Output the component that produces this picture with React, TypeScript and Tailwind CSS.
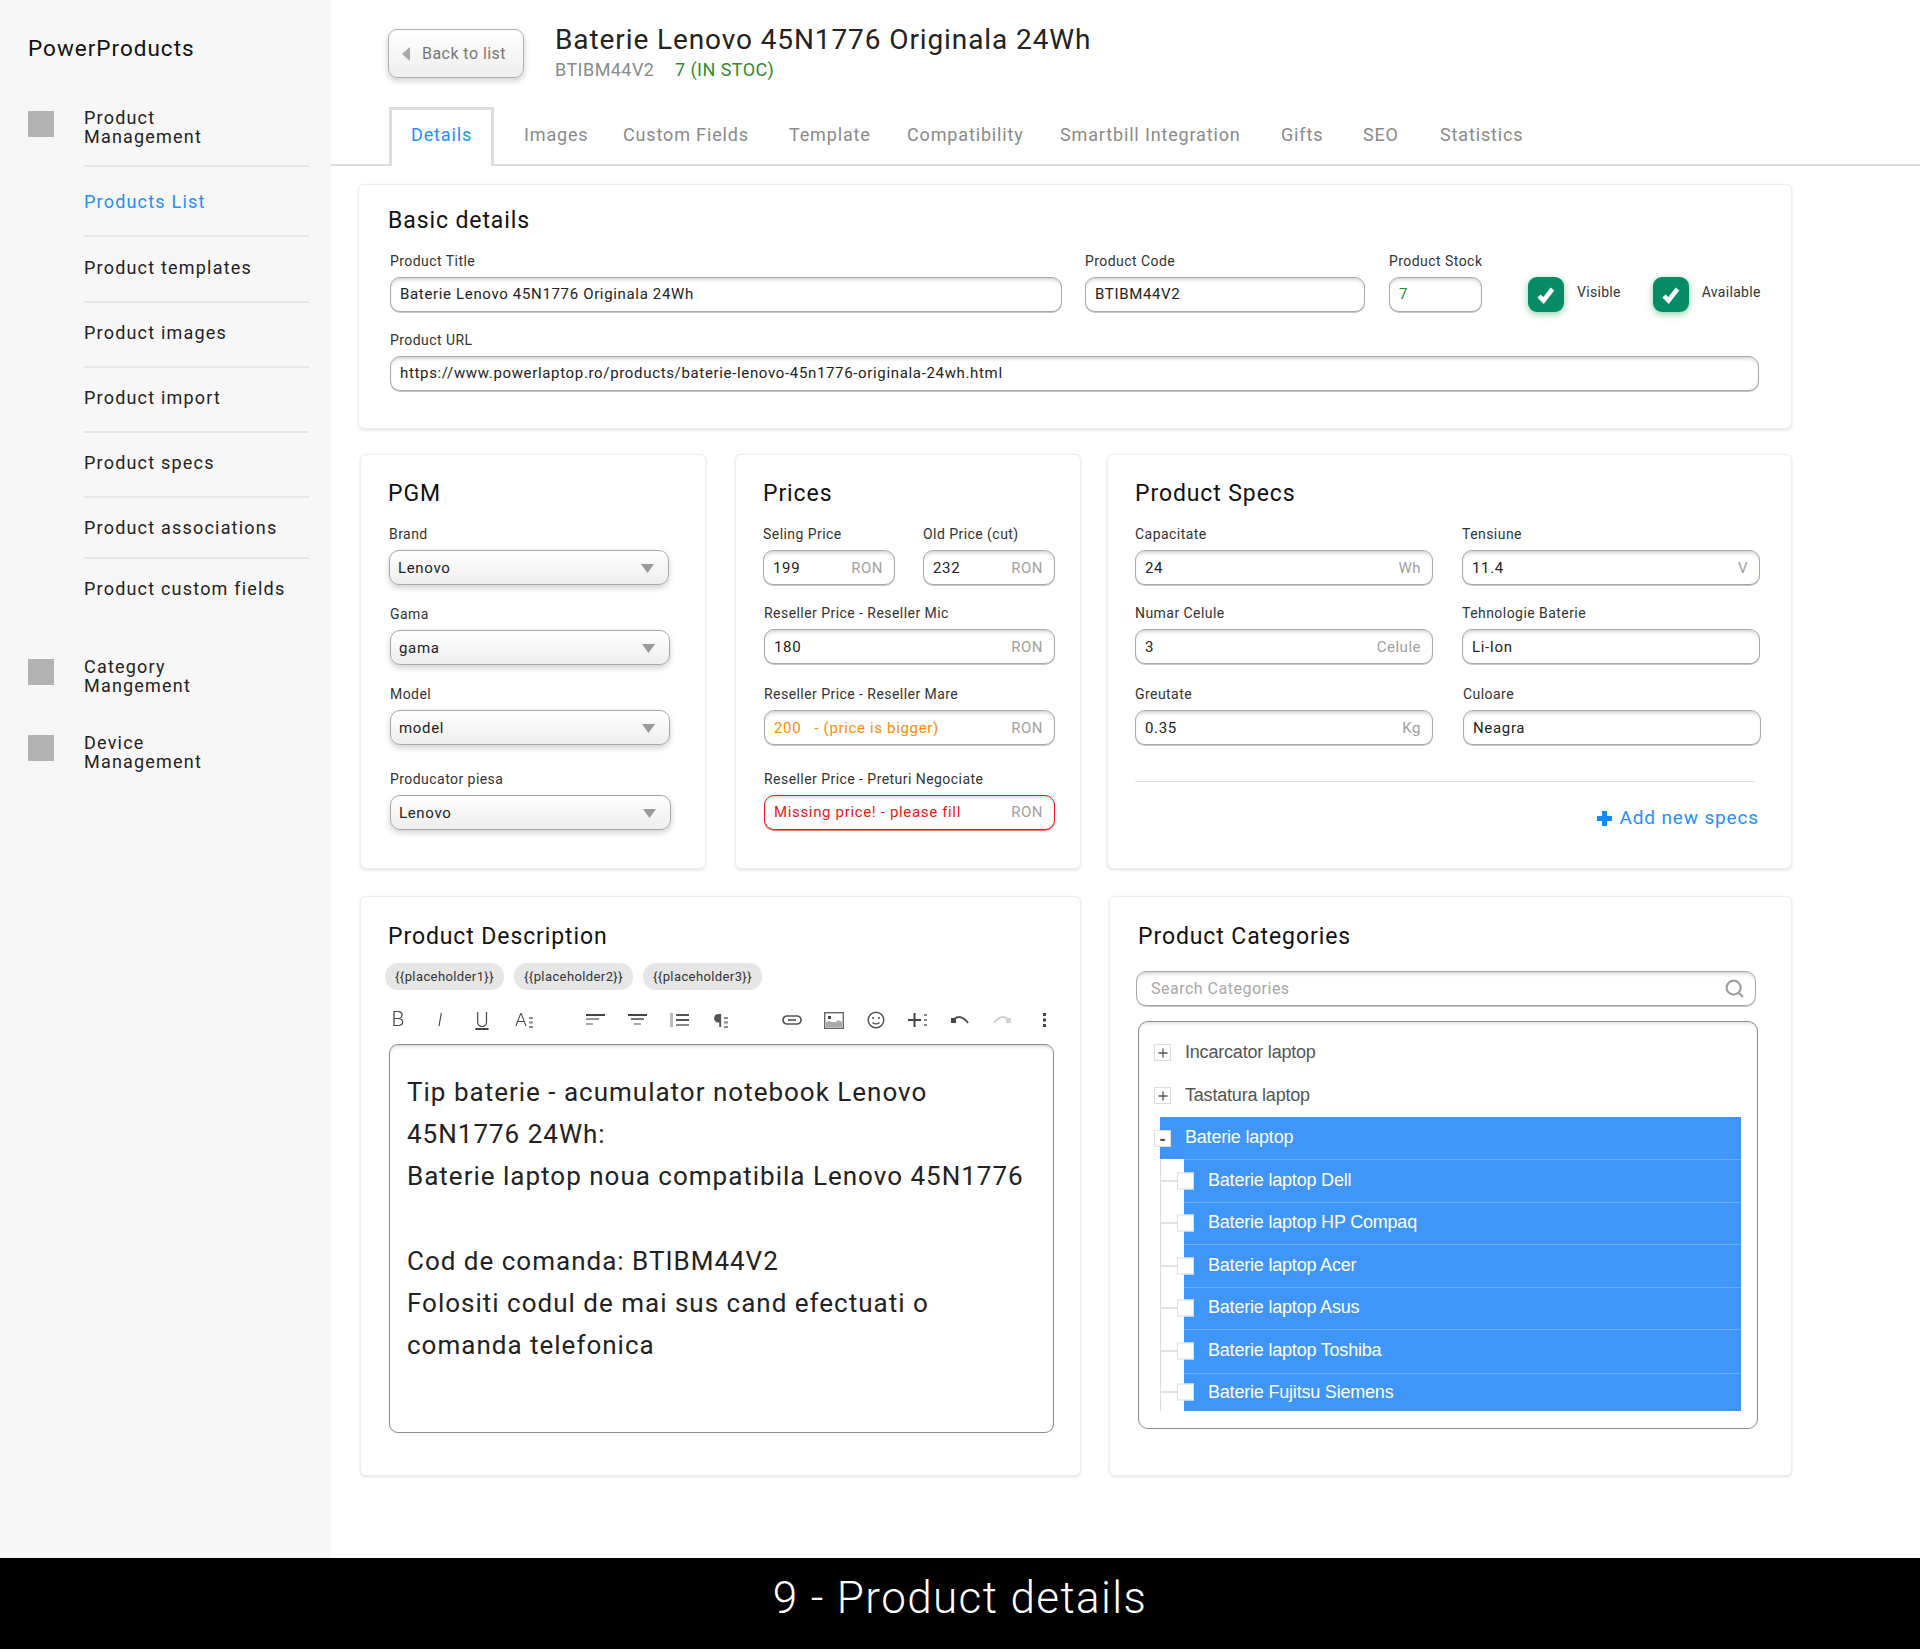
import React from "react";
import { Plus, Search } from "lucide-react";

const label = "block h-[16px] mb-[8px] text-[14px] leading-[16px] tracking-[0.45px] text-[#333] whitespace-nowrap";
const inputBox = "h-[35px] flex items-center justify-between pl-[9px] pr-[11px] rounded-[10px] border border-[#a8a8a8] bg-white text-[15px] tracking-[0.66px] text-[#222] shadow-[inset_0_4px_4px_-3px_rgba(0,0,0,0.25),0_1px_0_#c4c4c4] whitespace-nowrap";
const rowBox = inputBox + " pt-[1px]";
const selectBox = "h-[35px] flex items-center justify-between pt-[1px] pl-[8px] pr-[14px] rounded-[10px] border border-[#a8a8a8] bg-gradient-to-b from-white to-[#eeeeee] text-[15px] tracking-[0.66px] text-[#222] shadow-[0_3px_6px_rgba(0,0,0,0.18)] whitespace-nowrap";
const card = "bg-white rounded-[6px] border border-[#eeeeee] shadow-[0_1px_3px_rgba(0,0,0,0.12)]";
const h2 = "h-[28px] text-[23px] leading-[28px] tracking-[0.9px] text-[#111] whitespace-nowrap";
const unit = "text-[#a0a0a0] tracking-[0.5px]";
const navText = "ml-[30px] text-[18px] leading-[19px] tracking-[1.2px] text-[#222]";
const navIcon = "block w-[26px] h-[26px] bg-[#b3b3b3] shrink-0";
const sub = "flex items-center ml-[84px] w-[225px] border-b-2 border-[#e6e6e6] text-[18px] tracking-[1.2px] text-[#222]";

function Sidebar() {
  return (
    <aside className="w-[331px] shrink-0 bg-[#f7f7f7]">
      <div className="h-[108px] pl-[28px] pt-[34px] text-[22.5px] leading-[28px] tracking-[1px] text-[#111]">PowerProducts</div>
      <div className="flex pl-[28px] h-[57px] items-start">
        <span className={navIcon + " mt-[3px]"} />
        <div className={navText}>Product<br />Management</div>
      </div>
      <div className="h-[2px] ml-[84px] w-[225px] bg-[#e6e6e6]" />
      <div className={sub + " h-[70px]"}><span className="text-[#1e90ff]">Products List</span></div>
      <div className={sub + " h-[66px] pb-[3px]"}>Product templates</div>
      <div className={sub + " h-[65px] pb-[4px]"}>Product images</div>
      <div className={sub + " h-[65px] pb-[4px]"}>Product import</div>
      <div className={sub + " h-[65px] pb-[4px]"}>Product specs</div>
      <div className={sub + " h-[61px]"}>Product associations</div>
      <div className="flex items-center ml-[84px] w-[225px] h-[58px] text-[18px] tracking-[1.2px] text-[#222]">Product custom fields</div>
      <div className="flex pl-[28px] mt-[40px] h-[76px] items-start">
        <span className={navIcon + " mt-[2px]"} />
        <div className={navText}>Category<br />Mangement</div>
      </div>
      <div className="flex pl-[28px] items-start">
        <span className={navIcon + " mt-[2px]"} />
        <div className={navText}>Device<br />Management</div>
      </div>
    </aside>
  );
}

function Header() {
  return (
    <div className="h-[107px] flex items-start pl-[57px] pt-[29px]">
      <div className="w-[136px] h-[49px] shrink-0 flex items-center pl-[13px] rounded-[9px] border border-[#b0b0b0] bg-gradient-to-b from-white to-[#eeeeee] shadow-[0_3px_6px_rgba(0,0,0,0.18)]">
        <svg width="8" height="14" viewBox="0 0 8 14" className="mr-[12px]"><path d="M8 0v14L0 7z" fill="#a8a8a8" /></svg>
        <span className="text-[16px] tracking-[0.45px] text-[#777]">Back to list</span>
      </div>
      <div className="ml-[31px] -mt-[6px]">
        <div className="text-[28px] leading-[34px] tracking-[0.9px] text-[#222] whitespace-nowrap">Baterie Lenovo 45N1776 Originala 24Wh</div>
        <div className="flex mt-[2px] text-[18px] leading-[22px] tracking-[0.45px]">
          <span className="w-[120px] text-[#8a8a8a]">BTIBM44V2</span>
          <span className="text-[#2e8b2e]">7 (IN STOC)</span>
        </div>
      </div>
    </div>
  );
}

function Tabs() {
  const cls = "flex items-center h-[54px] text-[18px] tracking-[0.85px] text-[#8a8a8a] whitespace-nowrap";
  return (
    <div className="h-[59px] flex border-b-2 border-[#dddddd] pl-[58px]">
      <div className="w-[105px] h-[59px] mr-[30px] flex items-center justify-center pb-[7px] border-[3px] border-b-0 border-[#dddddd] bg-white text-[18px] tracking-[0.85px] text-[#1e90ff]">Details</div>
      <div className={cls + " w-[99px]"}>Images</div>
      <div className={cls + " w-[166px]"}>Custom Fields</div>
      <div className={cls + " w-[118px]"}>Template</div>
      <div className={cls + " w-[153px]"}>Compatibility</div>
      <div className={cls + " w-[221px]"}>Smartbill Integration</div>
      <div className={cls + " w-[82px]"}>Gifts</div>
      <div className={cls + " w-[77px]"}>SEO</div>
      <div className={cls}>Statistics</div>
    </div>
  );
}

function Field({ name, cls, children, box }: { name: string; cls?: string; children: React.ReactNode; box?: string }) {
  return (
    <div className={cls}>
      <span className={label}>{name}</span>
      <div className={box ?? rowBox}>{children}</div>
    </div>
  );
}

function CheckTick({ name, cls }: { name: string; cls: string }) {
  return (
    <div className={"flex items-start shrink-0 mt-[24px] " + cls}>
      <div className="w-[36px] h-[35px] shrink-0 rounded-[9px] bg-[#078a66] flex items-center justify-center shadow-[0_2px_7px_rgba(40,170,80,0.55)]">
        <svg width="20" height="18" viewBox="0 0 20 18"><path d="M3 10l4.500 4.500L16.500 3" fill="none" stroke="#fff" strokeWidth="4.500" /></svg>
      </div>
      <span className="ml-[13px] mt-[7px] text-[14px] leading-[16px] tracking-[0.3px] text-[#333]">{name}</span>
    </div>
  );
}

function BasicDetails() {
  return (
    <section className={card + " ml-[27px] w-[1434px] h-[245px] pt-[22px] pl-[31px]"}>
      <h2 className={h2 + " -ml-[2px]"}>Basic details</h2>
      <div className="flex mt-[18px]">
        <Field name="Product Title" box={inputBox} cls="w-[672px]">Baterie Lenovo 45N1776 Originala 24Wh</Field>
        <Field name="Product Code" box={inputBox} cls="w-[280px] ml-[23px]">BTIBM44V2</Field>
        <Field name="Product Stock" box={inputBox} cls="w-[93px] ml-[24px]"><span className="text-[#2e8b2e]">7</span></Field>
        <CheckTick name="Visible" cls="ml-[46px]" />
        <CheckTick name="Available" cls="ml-[32px]" />
      </div>
      <Field name="Product URL" box={inputBox} cls="w-[1369px] mt-[20px]">https://www.powerlaptop.ro/products/baterie-lenovo-45n1776-originala-24wh.html</Field>
    </section>
  );
}

function Arrow() {
  return <svg width="13" height="9" viewBox="0 0 13 9"><path d="M0 0h13L6.500 9z" fill="#9a9a9a" /></svg>;
}

function Pgm() {
  const items: [string, string, string][] = [
    ["Brand", "Lenovo", "mt-[18px] ml-[28px] w-[280px]"],
    ["Gama", "gama", "mt-[21px] ml-[29px] w-[280px]"],
    ["Model", "model", "mt-[21px] ml-[29px] w-[280px]"],
    ["Producator piesa", "Lenovo", "mt-[26px] ml-[29px] w-[281px]"],
  ];
  return (
    <section className={card + " w-[346px] h-[415px] pt-[25px]"}>
      <h2 className={h2 + " ml-[27px]"}>PGM</h2>
      {items.map(([n, v, c]) => (
        <Field key={n} name={n} cls={c} box={selectBox}>
          {v}
          <Arrow />
        </Field>
      ))}
    </section>
  );
}

function Prices() {
  return (
    <section className={card + " w-[346px] h-[415px] ml-[29px] pt-[25px] pl-[27px]"}>
      <h2 className={h2}>Prices</h2>
      <div className="flex mt-[18px]">
        <Field name="Seling Price" cls="w-[132px]">199<span className={unit}>RON</span></Field>
        <Field name="Old Price (cut)" cls="w-[132px] ml-[28px]">232<span className={unit}>RON</span></Field>
      </div>
      <Field name="Reseller Price - Reseller Mic" cls="w-[291px] ml-[1px] mt-[20px]">180<span className={unit}>RON</span></Field>
      <Field name="Reseller Price - Reseller Mare" cls="w-[291px] ml-[1px] mt-[22px]">
        <span className="text-[#ff8c00]">200 &nbsp; - (price is bigger)</span><span className={unit}>RON</span>
      </Field>
      <Field
        name="Reseller Price - Preturi Negociate"
        cls="w-[291px] ml-[1px] mt-[26px]"
        box="h-[35px] flex items-center justify-between pl-[9px] pr-[11px] rounded-[10px] border border-[#f01515] bg-white text-[15px] tracking-[0.66px] shadow-[inset_0_4px_4px_-3px_rgba(0,0,0,0.2),0_1px_0_#f77] whitespace-nowrap"
      >
        <span className="text-[#f01515]">Missing price! - please fill</span><span className={unit}>RON</span>
      </Field>
    </section>
  );
}

function Specs() {
  return (
    <section className={card + " w-[685px] h-[415px] ml-[26px] pt-[25px] pl-[27px]"}>
      <h2 className={h2}>Product Specs</h2>
      <div className="flex mt-[18px]">
        <Field name="Capacitate" cls="w-[298px]">24<span className={unit}>Wh</span></Field>
        <Field name="Tensiune" cls="w-[298px] ml-[29px]">11.4<span className={unit}>V</span></Field>
      </div>
      <div className="flex mt-[20px]">
        <Field name="Numar Celule" cls="w-[298px]">3<span className={unit}>Celule</span></Field>
        <Field name="Tehnologie Baterie" cls="w-[298px] ml-[29px]">Li-Ion</Field>
      </div>
      <div className="flex mt-[22px]">
        <Field name="Greutate" cls="w-[298px]">0.35<span className={unit}>Kg</span></Field>
        <Field name="Culoare" cls="w-[298px] ml-[30px]">Neagra</Field>
      </div>
      <div className="w-[620px] h-[1px] mt-[36px] bg-[#e0e0e0]" />
      <div className="w-[624px] flex justify-end items-center mt-[23px] text-[19px] leading-[26px] tracking-[0.85px] text-[#1e90ff]">
        <svg width="15" height="15" viewBox="0 0 15 15" className="mr-[8px]"><path d="M5 0h5v5h5v5h-5v5H5v-5H0V5h5z" fill="#0f8bff" /></svg>
        Add new specs
      </div>
    </section>
  );
}

const cell = "w-[42px] h-[24px] shrink-0 flex items-center justify-center text-[#444]";

function Tool() {
  return (
    <div className="h-[24px] mt-[18px] ml-[16px] flex items-center blur-[0.4px]">
      <span className={cell + " text-[21px] font-light"}>B</span>
      <span className={cell + " text-[19px] font-light italic"}>I</span>
      <span className={cell + " text-[20px] font-light underline"}>U</span>
      <span className={cell}>
        <span className="text-[19px] font-light">A</span>
        <svg width="4" height="11" viewBox="0 0 4 11" className="ml-[2px] mt-[4px]" fill="#888"><path d="M0 0h4v2H0zM0 4.500h4v2H0zM0 9h4v2H0z" /></svg>
      </span>
      <span className="w-[29px] shrink-0" />
      <span className={cell}>
        <svg width="19" height="14" viewBox="0 0 19 14"><path d="M0 1h19v2H0z" fill="#444" /><path d="M0 5h13v2H0z" fill="#999" /><path d="M0 10h7v2H0z" fill="#aaa" /></svg>
      </span>
      <span className={cell}>
        <svg width="19" height="14" viewBox="0 0 19 14"><path d="M0 1h19v2H0z" fill="#444" /><path d="M3 5h13v2H3z" fill="#777" /><path d="M6 10h7v2H6z" fill="#aaa" /></svg>
      </span>
      <span className={cell}>
        <svg width="19" height="16" viewBox="0 0 19 16"><path d="M0 1h3v14H0z" fill="#bbb" /><path d="M6 2h13v2H6zM6 7h13v2H6z" fill="#555" /><path d="M6 12h13v2H6z" fill="#888" /></svg>
      </span>
      <span className={cell}>
        <span className="text-[18px] font-bold text-[#555]">¶</span>
        <svg width="4" height="11" viewBox="0 0 4 11" className="ml-[2px] mt-[4px]" fill="#888"><path d="M0 0h4v2H0zM0 4.500h4v2H0zM0 9h4v2H0z" /></svg>
      </span>
      <span className="w-[29px] shrink-0" />
      <span className={cell}>
        <svg width="20" height="10" viewBox="0 0 20 10" fill="none" stroke="#555" strokeWidth="1.700"><rect x="1" y="1" width="18" height="8" rx="4" /><path d="M6 5h8" /></svg>
      </span>
      <span className={cell}>
        <svg width="20" height="17" viewBox="0 0 20 17"><rect x="0.700" y="0.700" width="18.600" height="15.600" fill="#fff" stroke="#666" strokeWidth="1.400" /><path d="M2 10l3-1 3 1h4l2-2 4 2v5H2z" fill="#aaa" /><path d="M4 4h3v3H4z" fill="#444" /></svg>
      </span>
      <span className={cell}>
        <svg width="18" height="18" viewBox="0 0 18 18" fill="none" stroke="#555" strokeWidth="1.500"><circle cx="9" cy="9" r="7.800" /><path d="M5 7h2M11 7h2M5.500 11.500c2 1.800 5 1.800 7 0" /></svg>
      </span>
      <span className={cell}>
        <svg width="20" height="14" viewBox="0 0 20 14" fill="#444"><path d="M0 6h13v2H0zM5.500 0h2v14h-2z" /><path d="M16 1h3v2h-3zM16 6h3v2h-3zM16 11h3v2h-3z" fill="#888" /></svg>
      </span>
      <span className={cell}>
        <svg width="18" height="10" viewBox="0 0 18 10" fill="none"><path d="M0 3h5v5H0z" fill="#444" /><path d="M3 4c4-3 9-3 14 4" stroke="#555" strokeWidth="2" /></svg>
      </span>
      <span className={cell}>
        <svg width="18" height="10" viewBox="0 0 18 10" fill="none"><path d="M13 3h5v5h-5z" fill="#d0d0d0" /><path d="M15 4C11 1 6 1 1 8" stroke="#d0d0d0" strokeWidth="2" /></svg>
      </span>
      <span className={cell}>
        <svg width="3" height="14" viewBox="0 0 3 14" fill="#444"><path d="M0 0h3v3H0zM0 5.500h3v3H0zM0 11h3v3H0z" /></svg>
      </span>
    </div>
  );
}

function Description() {
  const chip = "h-[27px] w-[119px] flex items-center justify-center rounded-[13px] bg-[#e6e6e6] text-[13px] tracking-[0.4px] text-[#333]";
  return (
    <section className={card + " w-[721px] h-[580px] pt-[26px]"}>
      <h2 className={h2 + " ml-[27px]"}>Product Description</h2>
      <div className="flex gap-[10px] ml-[24px] mt-[12px]">
        <span className={chip}>{"{{placeholder1}}"}</span>
        <span className={chip}>{"{{placeholder2}}"}</span>
        <span className={chip}>{"{{placeholder3}}"}</span>
      </div>
      <Tool />
      <div className="ml-[28px] w-[665px] h-[389px] mt-[12px] pt-[26px] pl-[17px] rounded-[9px] border border-[#8c8c8c] shadow-[inset_0_4px_4px_-3px_rgba(0,0,0,0.2)] text-[26px] leading-[42.2px] tracking-[1px] text-[#222]">
        Tip baterie - acumulator notebook Lenovo
        <br />45N1776 24Wh:
        <br />Baterie laptop noua compatibila Lenovo 45N1776
        <br />&nbsp;
        <br />Cod de comanda: BTIBM44V2
        <br />Folositi codul de mai sus cand efectuati o
        <br />comanda telefonica
      </div>
    </section>
  );
}

const treeFont = "font-['Liberation_Sans',Arial,sans-serif] text-[18px] tracking-[-0.2px]";

function TreeBox({ children }: { children: React.ReactNode }) {
  return <span className="flex w-[17px] h-[17px] items-center justify-center shrink-0 bg-white border border-[#dddddd] text-[#555]">{children}</span>;
}

function Categories() {
  const kids: [string, string, string][] = [
    ["Baterie laptop Dell", "h-[43px]", "pb-[1px]"],
    ["Baterie laptop HP Compaq", "h-[42px]", "pb-[2px]"],
    ["Baterie laptop Acer", "h-[43px]", "pb-[1px]"],
    ["Baterie laptop Asus", "h-[42px]", "pb-[2px]"],
    ["Baterie laptop Toshiba", "h-[44px]", "pb-[2px]"],
    ["Baterie Fujitsu Siemens", "h-[38px]", "pb-0"],
  ];
  return (
    <section className={card + " w-[683px] h-[580px] ml-[28px] pt-[26px]"}>
      <h2 className={h2 + " ml-[28px]"}>Product Categories</h2>
      <div className="ml-[26px] mt-[20px] w-[620px] h-[35px] flex items-center justify-between pl-[14px] pr-[10px] rounded-[10px] border border-[#a8a8a8] shadow-[inset_0_4px_4px_-3px_rgba(0,0,0,0.25),0_1px_0_#c4c4c4] text-[16px] tracking-[0.5px] text-[#a8a8a8]">
        Search Categories
        <Search size={21} strokeWidth={2.500} className="text-[#a0a0a0]" />
      </div>
      <div className={treeFont + " ml-[28px] mt-[15px] w-[620px] h-[408px] pt-[9px] pl-[15px] pr-[16px] rounded-[10px] border border-[#8c8c8c] shadow-[inset_0_4px_4px_-3px_rgba(0,0,0,0.15)] text-[#555]"}>
        <div className="flex items-center h-[43px]"><TreeBox><Plus size={14} strokeWidth={2.200} /></TreeBox><span className="ml-[14px]">Incarcator laptop</span></div>
        <div className="flex items-center h-[43px]"><TreeBox><Plus size={14} strokeWidth={2.200} /></TreeBox><span className="ml-[14px]">Tastatura laptop</span></div>
        <div className="ml-[6px] flex items-center h-[42px] pb-[1px] bg-[#3f96f7] text-white">
          <span className="-ml-[6px] mt-[2px]"><TreeBox><span className="font-bold leading-none">-</span></TreeBox></span>
          <span className="ml-[14px]">Baterie laptop</span>
        </div>
        <div className="ml-[6px] border-l border-[#dddddd]">
          {kids.map(([t, h, p]) => (
            <div key={t} className={"flex " + h}>
              <div className="relative w-[23px] shrink-0 flex items-center">
                <span className="block w-[17px] h-[2px] bg-[#e2e2e2]" />
                <span className="absolute left-[16px] top-1/2 -translate-y-1/2 z-10 block w-[17px] h-[17px] bg-white border border-[#dddddd]" />
              </div>
              <div className={"flex-1 flex items-center pl-[24px] bg-[#3f96f7] text-white border-t border-[#6aaef7] " + p}>{t}</div>
            </div>
          ))}
        </div>
      </div>
    </section>
  );
}

export default function App() {
  return (
    <div className="w-[1920px] h-[1652px] bg-white font-['Roboto',sans-serif]">
      <div className="flex h-[1558px]">
        <Sidebar />
        <main className="flex-1">
          <Header />
          <Tabs />
          <div className="pt-[18px]">
            <BasicDetails />
            <div className="flex mt-[25px] ml-[29px]">
              <Pgm />
              <Prices />
              <Specs />
            </div>
            <div className="flex mt-[27px] ml-[29px]">
              <Description />
              <Categories />
            </div>
          </div>
        </main>
      </div>
      <footer className="h-[91px] pb-[12px] bg-black text-white flex items-center justify-center text-[44px] font-light tracking-[1.4px]">9 - Product details</footer>
    </div>
  );
}
